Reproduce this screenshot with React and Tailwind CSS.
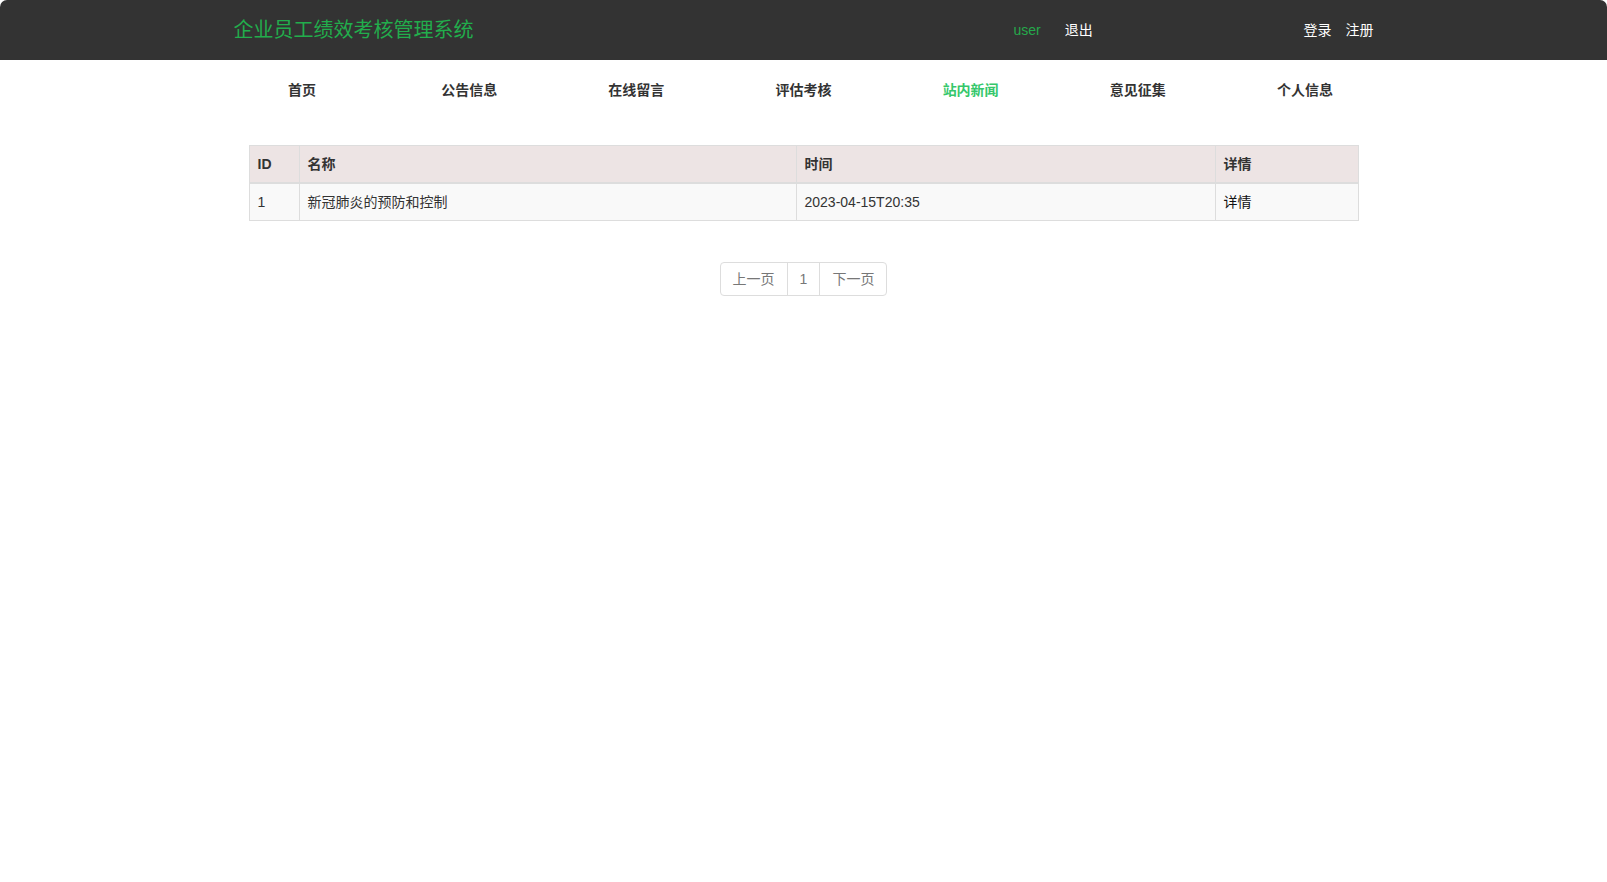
import React from "react";

const navItems = ["首页", "公告信息", "在线留言", "评估考核", "站内新闻", "意见征集", "个人信息"];

export default function App() {
  return (
    <div
      className="min-h-[882px] bg-white rounded-[7px] overflow-hidden text-[14px] text-[#333]"
      style={{ fontFamily: '"Liberation Sans", Arial, "Noto Sans CJK SC", sans-serif' }}
    >
      <header className="h-[60px] bg-[#333333]">
        <div className="w-[1170px] mx-auto px-[15px] h-full flex items-center">
          <div className="w-[780px] text-[20px] leading-[28px] text-[#22ad4c]">企业员工绩效考核管理系统</div>
          <div className="flex items-center gap-[24px] leading-[20px]">
            <span className="text-[#25a94b]">user</span>
            <span className="text-white">退出</span>
          </div>
          <div className="ml-auto flex items-center gap-[14px] leading-[20px] text-white">
            <span>登录</span>
            <span>注册</span>
          </div>
        </div>
      </header>
      <nav className="w-[1170px] mx-auto h-[60px] grid grid-cols-7 items-center">
        {navItems.map((n) => (
          <div
            key={n}
            className={
              "text-center font-bold leading-[20px] " + (n === "站内新闻" ? "text-[#35c76b]" : "text-[#333]")
            }
          >
            {n}
          </div>
        ))}
      </nav>
      <div className="w-[1110px] mx-auto mt-[25px]">
        <table className="w-full table-fixed border-collapse border border-[#dddddd]">
          <colgroup>
            <col className="w-[50px]" />
            <col className="w-[497px]" />
            <col className="w-[419px]" />
            <col />
          </colgroup>
          <thead>
            <tr className="bg-[#ede4e4]">
              {["ID", "名称", "时间", "详情"].map((h) => (
                <th
                  key={h}
                  className="text-left font-bold px-[8px] py-[8px] leading-[20px] border border-[#dddddd] border-b-2"
                >
                  {h}
                </th>
              ))}
            </tr>
          </thead>
          <tbody>
            <tr className="bg-[#f9f9f9]">
              <td className="px-[8px] py-[8px] leading-[20px] border border-[#dddddd]">1</td>
              <td className="px-[8px] py-[8px] leading-[20px] border border-[#dddddd]">新冠肺炎的预防和控制</td>
              <td className="px-[8px] py-[8px] leading-[20px] border border-[#dddddd]">2023-04-15T20:35</td>
              <td className="px-[8px] py-[8px] leading-[20px] border border-[#dddddd] text-[#111]">详情</td>
            </tr>
          </tbody>
        </table>
        <div className="flex justify-center mt-[41px]">
          <div className="flex text-[#777] leading-[20px]">
            <span className="px-[12px] py-[6px] border border-[#dddddd] rounded-l-[4px]">上一页</span>
            <span className="px-[12px] py-[6px] border border-[#dddddd] -ml-px">1</span>
            <span className="px-[12px] py-[6px] border border-[#dddddd] -ml-px rounded-r-[4px]">下一页</span>
          </div>
        </div>
      </div>
    </div>
  );
}
